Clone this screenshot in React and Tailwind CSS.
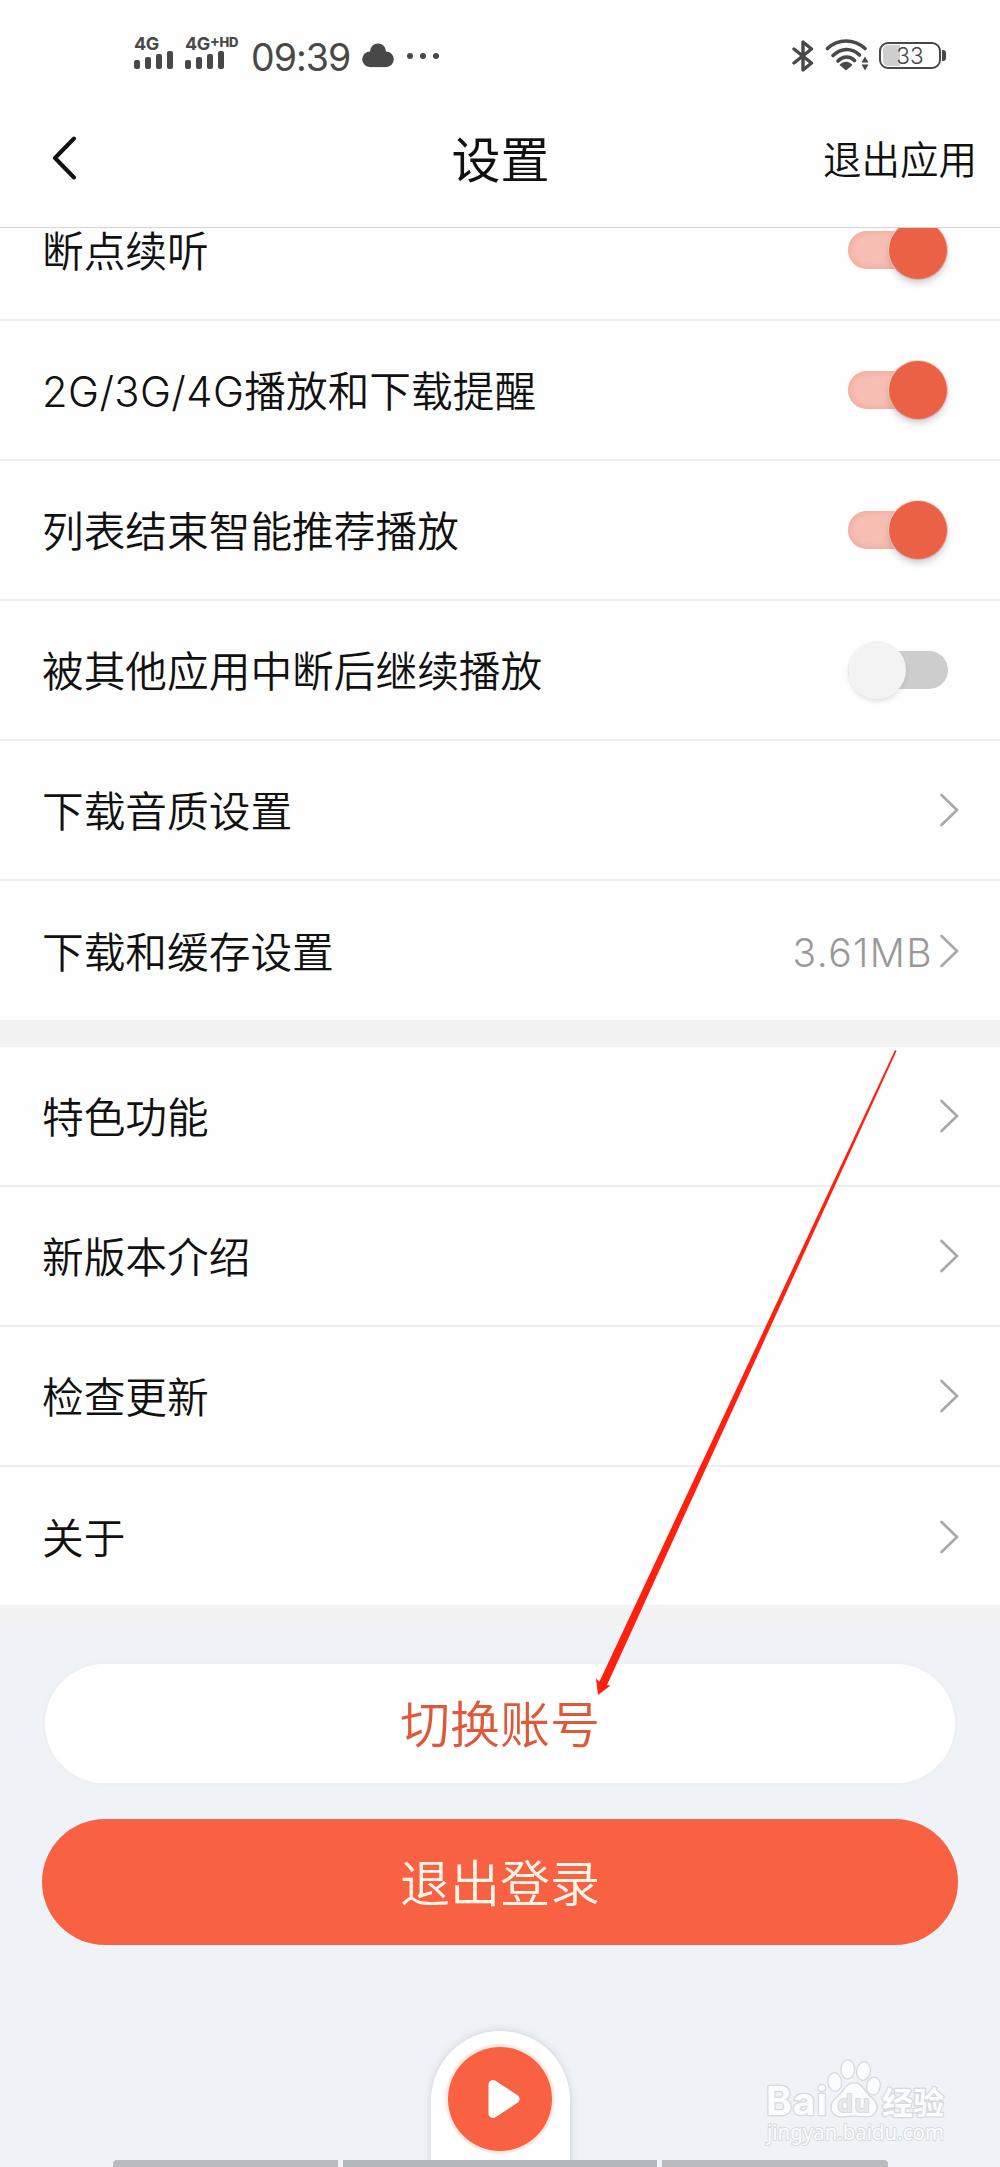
import React, { useState } from 'react';

const initialSwitches = [
    { id: 'resume', label: '断点续听', on: true },
    { id: 'network', prefix: '2G/3G/4G', label: '播放和下载提醒', on: true },
    { id: 'recommend', label: '列表结束智能推荐播放', on: true },
    { id: 'interrupt', label: '被其他应用中断后继续播放', on: false },
];

const downloadLinks = [
    { label: '下载音质设置' },
    { label: '下载和缓存设置', value: '3.61MB' },
];

const aboutLinks = [
    { label: '特色功能' },
    { label: '新版本介绍' },
    { label: '检查更新' },
    { label: '关于' },
];

function SignalBars() {
    return (
        <div className="flex items-end gap-[5px] h-[18px]">
            <span className="w-[6px] h-[9px] rounded-[2px] bg-[#484848]" />
            <span className="w-[6px] h-[12px] rounded-[2px] bg-[#484848]" />
            <span className="w-[6px] h-[15px] rounded-[2px] bg-[#484848]" />
            <span className="w-[6px] h-[18px] rounded-[2px] bg-[#484848]" />
        </div>
    );
}

function StatusBar() {
    return (
        <div className="h-[112px] flex items-start justify-between pl-[134px] pr-[59px] pt-[36px] text-[#484848]">
            <div className="flex items-start">
                <div className="w-[51px]">
                    <div className="h-[15px] leading-[15px] text-[18px] font-bold tracking-[-0.5px]">4G</div>
                    <SignalBars />
                </div>
                <div className="w-[66px]">
                    <div className="h-[15px] flex items-start leading-[15px] text-[18px] font-bold tracking-[-0.5px] whitespace-nowrap">
                        4G
                        <span className="text-[15px] leading-[9px]">+</span>
                        <span className="text-[13px] leading-[13px] font-extrabold tracking-[0px]">HD</span>
                    </div>
                    <SignalBars />
                </div>
                <div className="h-[42px] leading-[44px] text-[37.5px] font-[370] w-[111px] whitespace-nowrap tracking-[-1px]">09:39</div>
                <svg className="mt-[7px]" width="32" height="25" viewBox="0 0 32 25" fill="currentColor">
                    <circle cx="16" cy="8.5" r="8" />
                    <circle cx="8" cy="16.3" r="7.8" />
                    <circle cx="24" cy="16.3" r="7.8" />
                    <rect x="8" y="10" width="16" height="14.1" />
                </svg>
                <div className="flex gap-[7px] mt-[17px] ml-[13px]">
                    <span className="w-[6px] h-[6px] rounded-full bg-[#484848]" />
                    <span className="w-[6px] h-[6px] rounded-full bg-[#484848]" />
                    <span className="w-[6px] h-[6px] rounded-full bg-[#484848]" />
                </div>
            </div>
            <div className="flex items-start">
                <svg className="mt-[3px]" width="22" height="34" viewBox="0 0 22 34" fill="none" stroke="currentColor" strokeWidth="3.4" strokeLinejoin="round" strokeLinecap="round">
                    <path d="M2 10 L19.5 24 L11 31 V3 L19.5 10 L2 24" />
                </svg>
                <svg className="mt-[3px] ml-[11px]" width="44" height="34" viewBox="0 0 44 34" fill="none" stroke="currentColor" strokeWidth="3.6" strokeLinecap="round">
                    <path d="M2.5 9.5 C13 -0.5 29 -0.5 40 9.5" />
                    <path d="M8 16.5 C16 8.5 27 8.5 34.5 16" />
                    <path d="M13 22 C18 16.8 25 16.8 29.5 21.5" />
                    <path d="M14.5 26 C18.5 21.8 23.5 21.8 27.5 26 L21 31.5 Z" fill="currentColor" stroke="none" />
                    <path d="M40 17.5 L43.5 23.5 H36.5 Z M36.5 25.5 H43.5 L40 31.5 Z" fill="currentColor" stroke="none" />
                </svg>
                <div className="relative mt-[6px] ml-[10px] w-[62px] h-[27px] rounded-[9px] border-[2.5px] border-[#484848]">
                    <div className="absolute left-[2px] top-[1px] bottom-[1px] w-[17px] rounded-l-[5px] bg-[#cfcfcf]" />
                    <div className="relative text-center text-[22.5px] leading-[23px] font-[350]">33</div>
                    <div className="absolute -right-[7px] top-[6px] w-[4px] h-[11px] rounded-r-[3px] bg-[#484848]" />
                </div>
            </div>
        </div>
    );
}

function Switch({ on, onClick }) {
    return (
        <button
            type="button"
            onClick={onClick}
            className={`relative w-[100px] h-[38px] rounded-full ${on ? 'bg-[#f7bfb4] shadow-[inset_0_0_8px_#efa193]' : 'bg-[#cdcdcd]'}`}
        >
            <span
                className={`absolute -top-[10px] w-[58px] h-[58px] rounded-full ${on ? 'right-[1px] bg-[#ea6146] shadow-[0_4px_6px_rgba(60,60,90,0.25),0_0_0_1px_#fbd5cb]' : 'left-0 bg-[#f3f3f3] shadow-[0_3px_4px_rgba(0,0,0,0.1)]'}`}
            />
        </button>
    );
}

function Row({ prefix, label, last, children }) {
    return (
        <div className={`h-[140px] pl-[42px] pr-[41px] flex items-center justify-between ${last ? '' : 'border-b-2 border-[#efefef]'}`}>
            <span className="text-[41.7px] leading-[60px] font-[350] text-[#111] mt-[3px]">
                {prefix && <span className="tracking-[0.4px]">{prefix}</span>}
                {label}
            </span>
            {children}
        </div>
    );
}

function LinkRow({ label, value, last }) {
    return (
        <Row label={label} last={last}>
            <div className="flex items-center">
                {value && <span className="text-[39px] leading-[50px] font-light text-[#999] tracking-[1.4px] mt-[3px] mr-[6px]">{value}</span>}
                <svg width="20" height="34" viewBox="0 0 20 34" fill="none" stroke="#a9a9a9" strokeWidth="2.7" strokeLinecap="round">
                    <path d="M2.5 2 L18 17 L2.5 32" />
                </svg>
            </div>
        </Row>
    );
}

function Watermark() {
    return (
        <div className="absolute left-[766px] top-[2058px] w-[190px]">
            <svg className="overflow-visible" width="190" height="100" viewBox="0 0 190 100" stroke="#d6d9dd" strokeWidth="2.6" strokeLinejoin="round" fill="#fbfcfd" paintOrder="stroke">
                <text x="0" y="57" fontSize="39" fontWeight="700" textLength="61" fontFamily="Inter, sans-serif">Bai</text>
                <g strokeWidth="2.6">
                    <path d="M88 25.5 C80 25.5 79 33 72.5 38.5 C66 43.5 64 49 67 54 C71 60.5 79 57.5 88 57.5 C97 57.5 105 60.5 109 54 C112 49 110 43.5 103.5 38.5 C97 33 96 25.5 88 25.5 Z" />
                    <ellipse cx="68.7" cy="24" rx="6.2" ry="8.7" transform="rotate(-8 68.7 24)" />
                    <ellipse cx="81.7" cy="11.5" rx="6.2" ry="9" />
                    <ellipse cx="97.5" cy="13" rx="6.2" ry="8.7" transform="rotate(10 97.5 13)" />
                    <ellipse cx="107.5" cy="28" rx="6.2" ry="8.3" transform="rotate(8 107.5 28)" />
                </g>
                <text x="71.5" y="53.5" fontSize="24" fontWeight="600" textLength="32" fill="#e6eaef" strokeWidth="2.2" fontFamily="Inter, sans-serif">du</text>
                <text x="116" y="55.5" fontSize="31" fontWeight="700" textLength="62" fontFamily="'Noto Sans CJK SC', sans-serif">经验</text>
                <text x="1" y="82" fontSize="21.5" strokeWidth="2" textLength="177" lengthAdjust="spacingAndGlyphs" fontFamily="'Noto Sans', sans-serif">jingyan.baidu.com</text>
            </svg>
        </div>
    );
}

export default function App() {
    const [switches, setSwitches] = useState(initialSwitches);

    const toggle = (id) => {
        setSwitches(switches.map((s) => (s.id === id ? { ...s, on: !s.on } : s)));
    };

    return (
        <div className="relative w-[1000px] h-[2167px] overflow-hidden flex flex-col bg-[#eff3f7] font-['Inter','Noto_Sans_CJK_SC',sans-serif]">
            <div className="bg-[#fefefe] border-b border-[#d6d6d6] h-[228px] shrink-0">
                <StatusBar />
                <div className="h-[94px] grid grid-cols-3 items-center pl-[51px] pr-[23px]">
                    <svg width="28" height="46" viewBox="0 0 28 46" fill="none" stroke="#111" strokeWidth="4" strokeLinecap="round" strokeLinejoin="round">
                        <path d="M23 2.5 L4 22 L23 41.5" />
                    </svg>
                    <h1 className="text-[49px] leading-[70px] text-[#111] text-center font-[370] -ml-[27px] mt-[3px]">设置</h1>
                    <button type="button" className="text-right text-[38.5px] leading-[60px] font-[350] text-[#111] mt-[1px]">退出应用</button>
                </div>
            </div>

            {/* Playback and download */}
            <div className="bg-[#fefefe] overflow-hidden h-[792px] shrink-0">
                <div className="-mt-[47px]">
                    {switches.map((s) => (
                        <Row key={s.id} prefix={s.prefix} label={s.label}>
                            <div className="mr-[11px] flex">
                                <Switch on={s.on} onClick={() => toggle(s.id)} />
                            </div>
                        </Row>
                    ))}
                    {downloadLinks.map((item, i) => (
                        <LinkRow key={item.label} {...item} last={i === downloadLinks.length - 1} />
                    ))}
                </div>
            </div>

            <div className="h-[27px] bg-[#f2f2f2] shrink-0" />

            {/* About */}
            <div className="bg-[#fefefe] h-[558px] overflow-hidden shrink-0">
                {aboutLinks.map((item, i) => (
                    <LinkRow key={item.label} {...item} last={i === aboutLinks.length - 1} />
                ))}
            </div>

            <div className="h-[24px] bg-[#f2f2f2] shrink-0" />

            <div className="pt-[35px] px-[42px] flex flex-col">
                <button type="button" className="mx-[3px] h-[119px] rounded-full bg-white text-[50px] font-[350] text-[#e0583a] shadow-[0_0_0_3px_#eff0f1] pt-[4px]">
                    切换账号
                </button>
                <button type="button" className="mt-[36px] h-[126px] rounded-full bg-[#f86142] text-[50px] font-[350] text-[#fff6ea] pt-[4px]">
                    退出登录
                </button>
            </div>

            {/* Player tab */}
            <div className="mt-auto self-center w-[139px] h-[136px] rounded-t-full bg-white shadow-[0_0_8px_rgba(120,100,100,0.25)] pt-[16px] flex justify-center">
                <div className="w-[104px] h-[104px] rounded-full bg-[#f86142] shadow-[0_0_0_3px_#fdeae5] flex items-center justify-center">
                    <svg className="ml-[8px]" width="32" height="44" viewBox="0 0 32 44" fill="white" stroke="white" strokeWidth="9" strokeLinejoin="round">
                        <path d="M5 7.5 L27 22 L5 36.5 Z" />
                    </svg>
                </div>
            </div>

            {/* System gesture bar */}
            <div className="absolute bottom-0 left-[113px] w-[775px] h-[7px] flex gap-[5px]">
                <div className="w-[225px] bg-[#b9babb] rounded-tl-[4px]" />
                <div className="flex-1 bg-[#b3b8bc]" />
                <div className="w-[226px] bg-[#b9babb] rounded-tr-[4px]" />
            </div>

            <Watermark />

            {/* Pointer to the switch account button */}
            <svg className="absolute left-[590px] top-[1045px] pointer-events-none" width="312" height="655" viewBox="590 1045 312 655" fill="#ff2010">
                <path d="M895 1050 L896.5 1051 L607 1685 L610.5 1685.5 L598 1695 L596 1678.5 L599.5 1681.5 Z" />
            </svg>
        </div>
    );
}
